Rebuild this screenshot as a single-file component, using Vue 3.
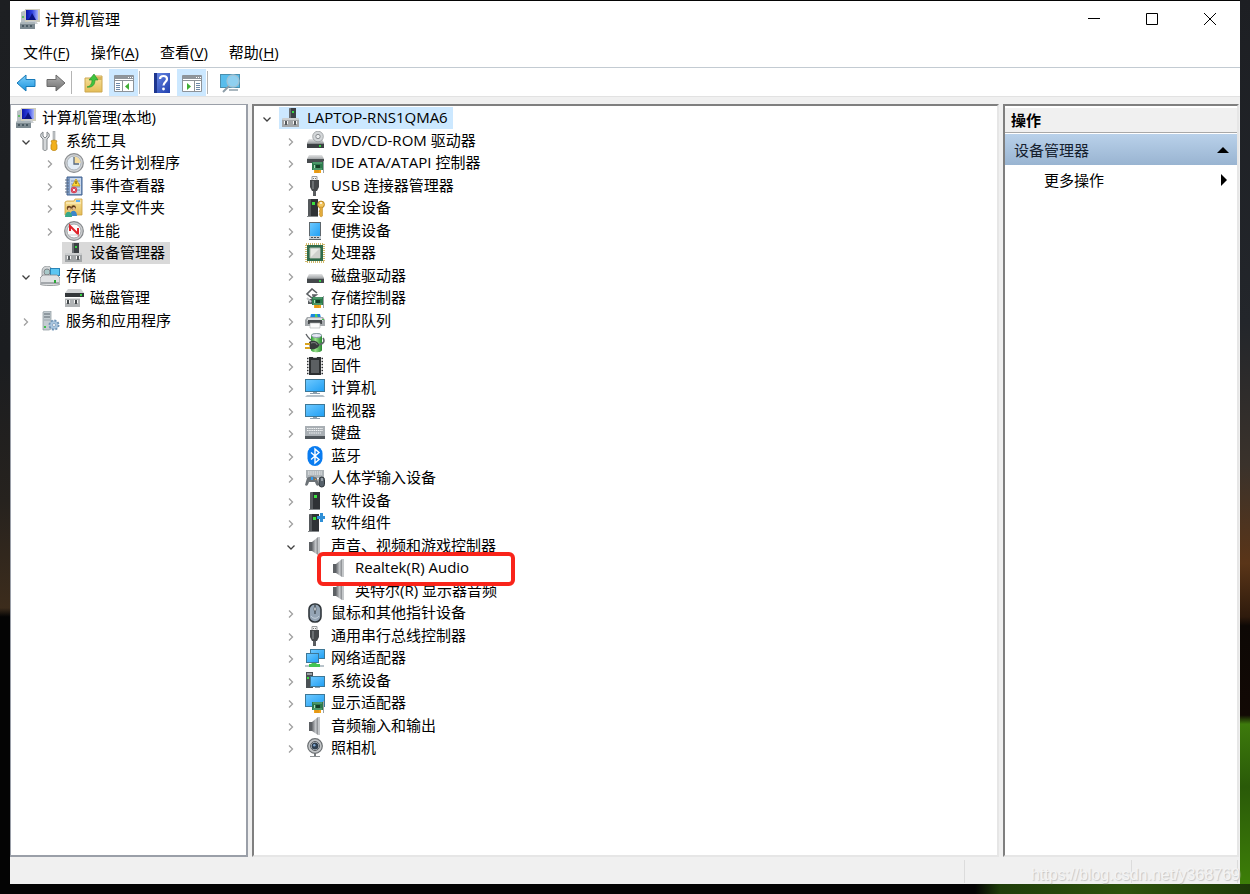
<script setup>
import { ref } from 'vue'

const menus = [
  { text: '文件', key: 'F' },
  { text: '操作', key: 'A' },
  { text: '查看', key: 'V' },
  { text: '帮助', key: 'H' }
]

const tools = [
  { icon: 'back', label: '后退' },
  { icon: 'forward', label: '前进' },
  { sep: true },
  { icon: 'up', label: '上移' },
  { icon: 'panel-left', label: '显示/隐藏控制台树', on: true },
  { sep: true },
  { icon: 'help', label: '帮助' },
  { icon: 'panel-right', label: '显示/隐藏操作窗格', on: true },
  { sep: true },
  { icon: 'scan', label: '扫描检测硬件改动' }
]

const consoleTree = [
  { level: 'root', icon: 'manage', text: '计算机管理(本地)' },
  { level: 0, icon: 'tools', text: '系统工具', state: 'open' },
  { level: 1, icon: 'clock', text: '任务计划程序', state: 'closed' },
  { level: 1, icon: 'events', text: '事件查看器', state: 'closed' },
  { level: 1, icon: 'shared', text: '共享文件夹', state: 'closed' },
  { level: 1, icon: 'perf', text: '性能', state: 'closed' },
  { level: 1, icon: 'device', text: '设备管理器', selected: true },
  { level: 0, icon: 'storage', text: '存储', state: 'open' },
  { level: 1, icon: 'diskmgmt', text: '磁盘管理' },
  { level: 0, icon: 'services', text: '服务和应用程序', state: 'closed' }
]

const category = (icon, text) => ({ level: 1, icon, text, state: 'closed' })

const deviceTree = [
  { level: 0, icon: 'device', text: 'LAPTOP-RNS1QMA6', state: 'open', selected: true },
  category('dvd', 'DVD/CD-ROM 驱动器'),
  category('ide', 'IDE ATA/ATAPI 控制器'),
  category('usb', 'USB 连接器管理器'),
  category('security', '安全设备'),
  category('portable', '便携设备'),
  category('cpu', '处理器'),
  category('disk', '磁盘驱动器'),
  category('storagectl', '存储控制器'),
  category('printer', '打印队列'),
  category('battery', '电池'),
  category('firmware', '固件'),
  category('computer', '计算机'),
  category('monitor', '监视器'),
  category('keyboard', '键盘'),
  category('bluetooth', '蓝牙'),
  category('hid', '人体学输入设备'),
  category('software', '软件设备'),
  category('component', '软件组件'),
  { level: 1, icon: 'speaker', text: '声音、视频和游戏控制器', state: 'open' },
  { level: 2, icon: 'speaker', text: 'Realtek(R) Audio', marked: true },
  { level: 2, icon: 'speaker', text: '英特尔(R) 显示器音频' },
  category('mouse', '鼠标和其他指针设备'),
  category('usb', '通用串行总线控制器'),
  category('network', '网络适配器'),
  category('system', '系统设备'),
  category('display', '显示适配器'),
  category('speaker', '音频输入和输出'),
  category('camera', '照相机')
]

const panes = ref([
  { name: 'console', label: '控制台树', rows: consoleTree },
  { name: 'devices', label: '设备', rows: deviceTree }
])
</script>

<template>
  <div class="desktop">
    <svg class="sprite" width="0" height="0" aria-hidden="true">
      <defs>
        <linearGradient id="g-screen" x1="0" y1="0" x2="1" y2="1">
          <stop offset="0" stop-color="#6cc8ff" />
          <stop offset="1" stop-color="#22a0f4" />
        </linearGradient>
        <linearGradient id="g-navy" x1="0" y1="0" x2="1" y2="0">
          <stop offset="0" stop-color="#0a14a8" />
          <stop offset="0.5" stop-color="#2c3fe0" />
          <stop offset="1" stop-color="#a8b4fa" />
        </linearGradient>
        <linearGradient id="g-drive" x1="0" y1="0" x2="0" y2="1">
          <stop offset="0" stop-color="#e4e5e6" />
          <stop offset="1" stop-color="#a5a8aa" />
        </linearGradient>
        <linearGradient id="g-cone" x1="0" y1="0" x2="1" y2="0">
          <stop offset="0" stop-color="#66696d" />
          <stop offset="0.6" stop-color="#c2c5c8" />
          <stop offset="1" stop-color="#85888c" />
        </linearGradient>
        <linearGradient id="g-folder" x1="0" y1="0" x2="0" y2="1">
          <stop offset="0" stop-color="#f8e3a0" />
          <stop offset="1" stop-color="#e5bd57" />
        </linearGradient>
        <linearGradient id="g-blue" x1="0" y1="0" x2="0" y2="1">
          <stop offset="0" stop-color="#7fd0fb" />
          <stop offset="1" stop-color="#1a93dd" />
        </linearGradient>
        <linearGradient id="g-gray" x1="0" y1="0" x2="0" y2="1">
          <stop offset="0" stop-color="#b4b4b4" />
          <stop offset="1" stop-color="#6e6e6e" />
        </linearGradient>
        <linearGradient id="g-green" x1="0" y1="0" x2="1" y2="0">
          <stop offset="0" stop-color="#2d9a35" />
          <stop offset="0.4" stop-color="#9be08d" />
          <stop offset="1" stop-color="#258a2d" />
        </linearGradient>
        <linearGradient id="g-help" x1="0" y1="0" x2="1" y2="1">
          <stop offset="0" stop-color="#6c8be6" />
          <stop offset="1" stop-color="#1f3fae" />
        </linearGradient>
      </defs>

      <symbol id="i-manage" viewBox="0 0 20 20">
        <path d="M1 3l5-2v12H1z" fill="#b9c0c4" />
        <circle cx="3" cy="8" r="1" fill="#43b84a" />
        <path d="M5 0h15v13H5z" fill="#cfcdbd" />
        <path d="M6 1h12v10H6z" fill="url(#g-navy)" />
        <path d="M6 11c4 0 5-5 6-7l4 7z" fill="#0a1280" />
        <path d="M8 12h8l2 3h-8z" fill="#c9cdd0" />
        <path d="M1 13h13l1 2v5H0v-5z" fill="#7d8a91" />
        <path d="M1 13h13l1 2H0z" fill="#a9b4b9" />
        <path d="M2 17h2M6 17h2M10 17h2" stroke="#4a5a63" stroke-width="2" />
      </symbol>

      <symbol id="i-tools" viewBox="0 0 20 20">
        <path d="M3 1v4l2 2 2-2V1c2 1 3 3 2 5L7 8v10c0 2-4 2-4 0V8L1 6C0 4 1 2 3 1z" fill="#d4d7d9" stroke="#83888b" />
        <path d="M13 0h2v9h-2z" fill="#c3c7ca" stroke="#8a8f93" stroke-width="0.5" />
        <path d="M11 10c1-1 5-1 6 0l-1 2 1 2v4c-1 2-5 2-6 0v-4l1-2z" fill="#f2b11d" stroke="#b87f08" stroke-width="0.7" />
      </symbol>

      <symbol id="i-clock" viewBox="0 0 20 20">
        <circle cx="10" cy="10" r="9.3" fill="#d3d5d7" stroke="#8b8e91" stroke-width="1.2" />
        <circle cx="10" cy="10" r="7" fill="#e3edf6" stroke="#9ea5ab" stroke-width="0.8" />
        <path d="M10 10V3.500a6.500 6.500 0 0 1 6.500 6.500z" fill="#f6dc9c" />
        <path d="M10 4v7h5" fill="none" stroke="#56677a" stroke-width="1.3" />
      </symbol>

      <symbol id="i-events" viewBox="0 0 20 20">
        <path d="M3 1h15v18H3z" fill="#7f9cc4" stroke="#41618f" />
        <path d="M6 2h11v16H6z" fill="#c9d8ec" />
        <path d="M7 5h9M7 8h9M7 11h9M7 14h9" stroke="#7d98bf" />
        <path d="M1 4h4M1 7h4M1 10h4M1 13h4M1 16h4" stroke="#5d6d83" />
        <path d="M12 3l4 7H8z" fill="#ffd83b" stroke="#c29206" stroke-width="0.7" />
        <path d="M12 5v3" stroke="#4f3b00" />
        <circle cx="10" cy="14" r="3.200" fill="#d9455a" />
        <path d="M8.800 12.800l2.400 2.400M11.200 12.800l-2.400 2.400" stroke="#fff" stroke-width="0.9" />
      </symbol>

      <symbol id="i-shared" viewBox="0 0 20 20">
        <path d="M1 4l2-1h7l1-2h7v16H1z" fill="url(#g-folder)" stroke="#caa03e" stroke-width="0.8" />
        <path d="M12 2h4v2h-4z" fill="#5aaef0" />
        <path d="M2 5h15" stroke="#fff3cc" />
        <circle cx="5" cy="10" r="2.300" fill="#6b4420" />
        <circle cx="9.500" cy="9.500" r="2.300" fill="#5b3716" />
        <circle cx="5.300" cy="11" r="1.500" fill="#e8bf92" />
        <circle cx="9.800" cy="10.500" r="1.500" fill="#e8bf92" />
        <path d="M6 18c0-7 7-7 7 0z" fill="#3d86c8" />
        <path d="M1 19c0-7 7-7 7 0z" fill="#37a889" />
      </symbol>

      <symbol id="i-perf" viewBox="0 0 20 20">
        <circle cx="10" cy="10" r="9.300" fill="#cfd1d3" stroke="#85888b" stroke-width="1.200" />
        <circle cx="10" cy="10" r="7" fill="#fdfdfd" stroke="#8f9498" stroke-width="0.800" />
        <path d="M6 10V5l8 8V7" fill="none" stroke="#e0242b" stroke-width="2" />
        <path d="M5 14h10" stroke="#c9cdd0" />
      </symbol>

      <symbol id="i-device" viewBox="0 0 20 20">
        <path d="M8 1l1-1h6v11H8z" fill="#3c4044" />
        <path d="M8 1l1-1h1v11H8z" fill="#6b7074" />
        <path d="M11 3h2v2h-2z" fill="#37d443" />
        <path d="M2 10h15l1 2v7H1v-7z" fill="#a3a6a8" />
        <path d="M2 10h15l1 2H1z" fill="#cdcfd0" />
        <path d="M3 13h4v3H3zM12 13h4v3h-4z" fill="#f4f4f4" />
        <path d="M4 13h2v4H4zM13 13h2v4h-2z" fill="#55595c" />
      </symbol>

      <symbol id="i-storage" viewBox="0 0 20 20">
        <path d="M2 5c0-6 8-6 9-3v8H2z" fill="#d2d5d7" stroke="#83888b" stroke-width="0.700" />
        <circle cx="7" cy="6" r="3" fill="#a8c8c8" stroke="#7f8689" />
        <path d="M10 2h10v8H10z" fill="#2a85b8" />
        <path d="M11 3h8v6h-8z" fill="#5bc5f2" />
        <path d="M0 12l3-3h14l3 3v6c0 2-20 2-20 0z" fill="#e0e2e4" stroke="#85898c" stroke-width="0.800" />
        <path d="M1 16h18v2H1z" fill="#a4a8ac" />
        <path d="M14 14h2v3h-2z" fill="#2ca838" />
      </symbol>

      <symbol id="i-diskmgmt" viewBox="0 0 20 20">
        <path d="M4 1h13l3 4H1z" fill="#d1d3d5" />
        <path d="M1 5h19v4H1z" fill="#33373a" />
        <path d="M16 6h2v2h-2z" fill="#35d143" />
        <path d="M1 10h15v9H1z" fill="#b0b3b5" />
        <path d="M1 10h15v1H1z" fill="#dcdedf" />
        <path d="M2 12h4v3H2zM10 12h4v3h-4z" fill="#f4f4f4" />
        <path d="M3 12h2v4H3zM11 12h2v4h-2z" fill="#44484b" />
      </symbol>

      <symbol id="i-services" viewBox="0 0 20 20">
        <path d="M3 1l2-1h6v18l-2 1H3z" fill="#c3ccd1" stroke="#8a969c" stroke-width="0.700" />
        <path d="M4 3h6M4 6h6" stroke="#5a676e" />
        <path d="M4 9h6" stroke="#9aa6ac" />
        <path d="M4 15h2v2H4z" fill="#3cc04a" />
        <circle cx="14" cy="14" r="4.500" fill="#9fbcd6" stroke="#6f93b5" stroke-width="2" stroke-dasharray="2 1.500" />
        <circle cx="14" cy="14" r="3.600" fill="#a9c6e0" />
        <circle cx="14" cy="14" r="1.500" fill="#fff" stroke="#6688a8" stroke-width="0.600" />
      </symbol>

      <symbol id="i-dvd" viewBox="0 0 20 20">
        <path d="M4 8h13l2 4H2z" fill="url(#g-drive)" />
        <circle cx="13" cy="5.500" r="5.300" fill="#d3d6d8" stroke="#94989b" stroke-width="0.800" />
        <circle cx="13" cy="5.500" r="2.200" fill="#eceeef" stroke="#8b8f92" />
        <path d="M2 12h17v5H2z" fill="#3c4043" />
        <path d="M2 12h17v1H2z" fill="#8b8f91" />
        <path d="M14 14h2v2h-2z" fill="#35d143" />
      </symbol>

      <symbol id="i-pcb" viewBox="0 0 20 20">
        <path d="M7 9h11v8H7z" fill="#2c7a4c" />
        <path d="M8 10h9M8 16h9" stroke="#68b184" />
        <path d="M11 12h4v3h-4z" fill="#143d26" />
        <path d="M9 12h1v3H9z" fill="#a9dcb9" />
        <path d="M9 17h7v3H9z" fill="#f2a51c" />
        <path d="M11 17v3M13 17v3" stroke="#b87309" stroke-width="0.500" />
        <path d="M18.500 8v12" stroke="#9ba1a5" />
      </symbol>

      <symbol id="i-ide" viewBox="0 0 20 20">
        <path d="M4 2h13l2 4H2z" fill="url(#g-drive)" />
        <path d="M2 6h17v4H2z" fill="#484c4f" />
        <use href="#i-pcb" width="20" height="20" />
      </symbol>

      <symbol id="i-usb" viewBox="0 0 20 20">
        <path d="M7 0.500h5v4H7z" fill="#f2f2f2" stroke="#9a9c9e" />
        <path d="M8 2h1v1H8zM10 2h1v1h-1z" fill="#777" />
        <path d="M5 4h9v7l-2 4H7l-2-4z" fill="#45484b" />
        <path d="M7 5h2v8H7z" fill="#6b6f72" />
        <path d="M8 15h3v5H8z" fill="#5a5d60" />
      </symbol>

      <symbol id="i-tower" viewBox="0 0 20 20">
        <path d="M5 2l1-1h9v18H5z" fill="#2f3235" />
        <path d="M5 2l1-1h2v17H5z" fill="#54585b" />
        <path d="M9 4h3v3H9z" fill="#3be03f" />
        <path d="M4 18h11v1H4z" fill="#85898b" />
      </symbol>

      <symbol id="i-software" viewBox="0 0 20 20">
        <use href="#i-tower" width="20" height="20" />
      </symbol>

      <symbol id="i-security" viewBox="0 0 20 20">
        <use href="#i-tower" x="-2" width="20" height="20" />
        <circle cx="16" cy="6.500" r="3.400" fill="#f3c65f" stroke="#b88520" />
        <circle cx="16" cy="5" r="1" fill="#fff" />
        <path d="M14.500 9h3v9l-1.500 1-1-1-1-2 1-1-1-2 1-1z" fill="#e3ab3b" stroke="#b88520" stroke-width="0.500" />
      </symbol>

      <symbol id="i-portable" viewBox="0 0 20 20">
        <path d="M4 1h12v18H4z" fill="#5d666c" />
        <path d="M5 2h10v13H5z" fill="url(#g-screen)" />
        <path d="M4 15h12v3H4z" fill="#c9ced2" />
        <path d="M6 16.500h2M9 16.500h2M12 16.500h2" stroke="#4b5358" />
      </symbol>

      <symbol id="i-cpu" viewBox="0 0 20 20">
        <rect x="1" y="1" width="18" height="18" fill="none" stroke="#c2a33d" stroke-width="1.500" stroke-dasharray="1 1" />
        <path d="M2 2h16v16H2z" fill="#2f6b4b" />
        <path d="M5 5h10v10H5z" fill="#e9eae6" stroke="#aab8a8" />
        <path d="M15 5v10H5z" fill="#cfd1cd" />
      </symbol>

      <symbol id="i-disk" viewBox="0 0 20 20">
        <path d="M4 8h13l2 4H2z" fill="url(#g-drive)" />
        <path d="M2 12h17v5H2z" fill="#44484b" />
        <path d="M2 12h17v1H2z" fill="#8b8f91" />
        <path d="M14 14h2v2h-2z" fill="#35d143" />
      </symbol>

      <symbol id="i-storagectl" viewBox="0 0 20 20">
        <path d="M12 5L7 1 2 6l5 4 4-3H7" fill="none" stroke="#5a5e61" stroke-width="1.600" />
        <path d="M3 11h7v5H3z" fill="#565a5d" />
        <path d="M2 10l4 4" stroke="#c4c7c9" stroke-width="2" />
        <use href="#i-pcb" width="20" height="20" />
      </symbol>

      <symbol id="i-printer" viewBox="0 0 20 20">
        <path d="M6 3h9l1 4H5z" fill="#1a86e0" />
        <path d="M10 3h2l1 4h-3z" fill="#4fd05b" />
        <path d="M2 6h16l2 3v6H0V9z" fill="#a4a8ab" />
        <path d="M3 7h14l1 3H2z" fill="#dcdedf" />
        <path d="M3 9h14v4H3z" fill="#45494c" />
        <path d="M5 12h10v5H5z" fill="#fbfbfb" stroke="#a8abad" stroke-width="0.600" />
        <path d="M17 8h2v1h-2z" fill="#43c04c" />
      </symbol>

      <symbol id="i-battery" viewBox="0 0 20 20">
        <path d="M6 3c0-4 11-4 11 0v14c0 3-11 3-11 0z" fill="url(#g-green)" />
        <ellipse cx="11.500" cy="2.500" rx="5" ry="2" fill="#e6e9f4" stroke="#7f85a5" stroke-width="0.800" />
        <path d="M1 1c2 4 3 4 5 6" fill="none" stroke="#5d6164" stroke-width="1.300" />
        <path d="M13 12c6-1 7-4 5-7" fill="none" stroke="#62686b" stroke-width="1.600" />
        <path d="M4 9c4-3 10 0 10 3s-5 5-9 4z" fill="#36393b" />
        <path d="M6 10c4-1 6 0 6 2" fill="none" stroke="#8b8f91" />
        <path d="M0 11h5M0 15h5" stroke="#d9a420" stroke-width="1.800" />
      </symbol>

      <symbol id="i-firmware" viewBox="0 0 20 20">
        <path d="M2 2.500h16M2 5.500h16M2 8.500h16M2 11.500h16M2 14.500h16M2 17.500h16" stroke="#2c2f31" stroke-width="1.500" />
        <path d="M3.500 1v18M16.500 1v18" stroke="#fff" stroke-width="0.500" />
        <path d="M4 1h4c0 2 4 2 4 0h4v18H4z" fill="#2c2f31" />
        <path d="M6 4h8v13H6z" fill="#5b5f62" />
      </symbol>

      <symbol id="i-computer" viewBox="0 0 20 20">
        <path d="M0 1h20v13H0z" fill="#3d7796" />
        <path d="M1 2h18v11H1z" fill="url(#g-screen)" />
        <path d="M8 14h4v1h3v1H5v-1h3z" fill="#8ca0ae" />
        <path d="M2 17h16l2 2H0z" fill="#b3bfc8" />
      </symbol>

      <symbol id="i-monitor" viewBox="0 0 20 20">
        <path d="M0 3h20v13H0z" fill="#3d7796" />
        <path d="M1 4h18v11H1z" fill="url(#g-screen)" />
        <path d="M8 16h4v1h3v1H5v-1h3z" fill="#8ca0ae" />
      </symbol>

      <symbol id="i-keyboard" viewBox="0 0 20 20">
        <path d="M0 3h20v10H0z" fill="#a9afb4" />
        <path d="M2 5.500h16M2 7.500h16M4 10h12" stroke="#f2f4f5" stroke-width="1.200" stroke-dasharray="1.500 0.700" />
        <path d="M0 13h20v3H0z" fill="#50565b" />
      </symbol>

      <symbol id="i-bluetooth" viewBox="0 0 20 20">
        <rect x="2.500" y="0" width="15" height="20" rx="7.500" fill="#0a7cf0" />
        <path d="M6 6.500l8 7-4 3.500V3l4 3.500-8 7" fill="none" stroke="#fff" stroke-width="1.400" />
      </symbol>

      <symbol id="i-hid" viewBox="0 0 20 20">
        <path d="M1 2h18v8H1z" fill="#aeb4b8" />
        <path d="M3 4h14M3 6h14" stroke="#f2f4f5" stroke-width="1.200" stroke-dasharray="1.500 0.700" />
        <path d="M2 10c3-2 7-2 10 0l2 7c-2 2-3 0-4-3H4c-1 3-2 5-4 3z" fill="#6c7277" />
        <path d="M6 9h2v3H6z" fill="#2f9df0" />
        <path d="M10 11h1v1h-1z" fill="#ee9b24" />
        <rect x="14" y="9" width="5.500" height="10" rx="2.700" fill="#55606a" stroke="#30373c" />
        <path d="M17 10v3" stroke="#d8dde0" />
      </symbol>

      <symbol id="i-component" viewBox="0 0 20 20">
        <use href="#i-tower" x="-1" width="20" height="20" />
        <path d="M15 0h3v3h2v3h-2v3h-3V6h-3V3h3z" fill="#2f8fd6" />
      </symbol>

      <symbol id="i-speaker" viewBox="0 0 20 20">
        <path d="M4 6h3v9H4z" fill="#5c6064" />
        <path d="M7 6l6-5v18l-6-4z" fill="url(#g-cone)" />
        <path d="M13 1h2v18h-2z" fill="#a9adb0" />
        <path d="M14 1v18" stroke="#dfe1e3" />
      </symbol>

      <symbol id="i-mouse" viewBox="0 0 20 20">
        <rect x="4" y="1" width="12" height="18" rx="5.500" fill="#95a5b5" stroke="#30363b" stroke-width="1.600" />
        <path d="M10 2v9" stroke="#3a4249" stroke-width="1.200" />
        <rect x="9" y="4" width="2" height="4" rx="1" fill="#dfe6ec" stroke="#30363b" stroke-width="0.500" />
        <path d="M6 13c2 3 6 3 8 0" fill="none" stroke="#c4d0da" />
      </symbol>

      <symbol id="i-network" viewBox="0 0 20 20">
        <path d="M5 1h15v10H5z" fill="#3d7796" />
        <path d="M6 2h13v8H6z" fill="url(#g-screen)" />
        <path d="M1 5h13v10H1z" fill="#3d7796" />
        <path d="M2 6h11v8H2z" fill="url(#g-screen)" />
        <path d="M7 15h4l1 1h3v3H4v-3h2z" fill="#43c453" />
        <path d="M0 17h4v2H0zM15 17h4v2h-4z" fill="#b9c4cb" />
      </symbol>

      <symbol id="i-system" viewBox="0 0 20 20">
        <path d="M1 1h7v16H1z" fill="#4b5155" />
        <path d="M2 2h5v2H2z" fill="#9aa0a4" />
        <path d="M2 6h2v2H2z" fill="#3be03f" />
        <path d="M5 5h15v11H5z" fill="#3d7796" />
        <path d="M6 6h13v9H6z" fill="url(#g-screen)" />
        <path d="M10 16h5v1h-5z" fill="#8ca0ae" />
      </symbol>

      <symbol id="i-display" viewBox="0 0 20 20">
        <path d="M0 1h20v13H0z" fill="#3d7796" />
        <path d="M1 2h18v11H1z" fill="url(#g-screen)" />
        <use href="#i-pcb" width="20" height="20" />
      </symbol>

      <symbol id="i-camera" viewBox="0 0 20 20">
        <path d="M9 14h2v4H9z" fill="#777b7e" />
        <path d="M5 18h10v1H5z" fill="#8d9194" />
        <circle cx="10" cy="8" r="7.300" fill="#c2c5c7" stroke="#6b6f72" stroke-width="1.200" />
        <circle cx="10" cy="8" r="4.500" fill="#dfe2e4" stroke="#5a5e61" />
        <circle cx="10" cy="8" r="3.500" fill="#30404f" />
        <circle cx="9.300" cy="7.300" r="1.200" fill="#7fa6d0" />
      </symbol>

      <symbol id="i-back" viewBox="0 0 20 20">
        <path d="M1 10l9-8v4.500h9v7h-9V18z" fill="url(#g-blue)" stroke="#1679b8" />
      </symbol>

      <symbol id="i-forward" viewBox="0 0 20 20">
        <path d="M19 10l-9-8v4.500H1v7h9V18z" fill="url(#g-gray)" stroke="#6a6a6a" />
      </symbol>

      <symbol id="i-up" viewBox="0 0 20 20">
        <path d="M1 5h7l2-2h8v16H1z" fill="url(#g-folder)" stroke="#cda850" />
        <path d="M11 4h7v3h-7z" fill="#d6b45c" />
        <path d="M3 14c4-1 5-4 5-7H5l5-6 4 6h-3c0 5-3 8-8 7z" fill="#3fc43f" stroke="#238c27" stroke-width="0.600" />
      </symbol>

      <symbol id="i-panel-left" viewBox="0 0 20 20">
        <path d="M0.500 2.500h19v16H.5z" fill="#fff" stroke="#8d9399" />
        <path d="M1 3h18v3H1z" fill="#8f959b" />
        <path d="M14 4.500h1M16 4.500h1M18 4.500h1" stroke="#fff" />
        <path d="M1 7.500h18M8.500 8v11" stroke="#8d9399" />
        <path d="M2 10.500h4M2 12.500h4M2 14.500h4M2 16.500h4" stroke="#6c88a8" />
        <path d="M15 10v7l-4-3.500z" fill="#3fae34" />
      </symbol>

      <symbol id="i-panel-right" viewBox="0 0 20 20">
        <path d="M0.500 2.500h19v16H.5z" fill="#fff" stroke="#8d9399" />
        <path d="M1 3h18v3H1z" fill="#8f959b" />
        <path d="M14 4.500h1M16 4.500h1M18 4.500h1" stroke="#fff" />
        <path d="M1 7.500h18M12.500 8v11" stroke="#8d9399" />
        <path d="M14 10.500h4M14 12.500h4M14 14.500h4M14 16.500h4" stroke="#6c88a8" />
        <path d="M5 10v7l4-3.500z" fill="#3fae34" />
      </symbol>

      <symbol id="i-help" viewBox="0 0 20 20">
        <path d="M2 0h16v20H2z" fill="url(#g-help)" />
        <path d="M2 0h3v20H2z" fill="#1e368f" />
        <path d="M8 6c0-4 7-4 7 0 0 3-3.500 3-3.500 6.500" fill="none" stroke="#fff" stroke-width="2.200" />
        <circle cx="11.500" cy="16" r="1.400" fill="#fff" />
      </symbol>

      <symbol id="i-scan" viewBox="0 0 20 20">
        <path d="M0 1h20v14H0z" fill="#4a8fae" />
        <path d="M1 2h18v12H1z" fill="#58bdec" />
        <path d="M9 16h9v2H9z" fill="#aab7bf" />
        <path d="M10 12l-7 7" stroke="#8d9da8" stroke-width="2" />
        <circle cx="13" cy="8" r="6" fill="#8fd0f0" stroke="#9fc3d6" stroke-width="1.300" />
      </symbol>
    </svg>

    <main class="window">
      <header class="titlebar">
        <svg class="icon"><use href="#i-manage" /></svg>
        <h1>计算机管理</h1>
        <div class="window-buttons">
          <button type="button" aria-label="最小化">
            <svg width="12" height="12" viewBox="0 0 12 12"><path d="M0 5.500h12" /></svg>
          </button>
          <button type="button" aria-label="最大化">
            <svg width="12" height="12" viewBox="0 0 12 12"><path d="M0.500 0.500h11v11h-11z" /></svg>
          </button>
          <button type="button" aria-label="关闭">
            <svg width="12" height="12" viewBox="0 0 12 12"><path d="M0 0l12 12M12 0L0 12" /></svg>
          </button>
        </div>
      </header>

      <nav class="menubar">
        <button v-for="m in menus" :key="m.key" type="button">{{ m.text }}(<u>{{ m.key }}</u>)</button>
      </nav>

      <div class="toolbar" role="toolbar">
        <template v-for="(t, i) in tools" :key="i">
          <span v-if="t.sep" class="sep"></span>
          <button v-else type="button" :class="{ on: t.on }" :aria-label="t.label">
            <svg class="icon"><use :href="'#i-' + t.icon" /></svg>
          </button>
        </template>
      </div>

      <div class="content">
        <section v-for="p in panes" :key="p.name" :class="['pane', p.name]" :aria-label="p.label">
          <ul class="tree">
            <li v-for="(row, i) in p.rows" :key="i" :class="['row', 'level-' + row.level]">
              <button v-if="row.state" type="button" :class="['toggle', row.state]" :aria-label="row.text">
                <svg width="10" height="10" viewBox="0 0 10 10">
                  <path v-if="row.state === 'open'" d="M1.500 3.500L5 7l3.500-3.500" />
                  <path v-else d="M3 1.500L6.500 5 3 8.500" />
                </svg>
              </button>
              <span v-else-if="row.level !== 'root'" class="toggle"></span>
              <span :class="['node', { selected: row.selected }]">
                <svg class="icon"><use :href="'#i-' + row.icon" /></svg>
                <span class="label">{{ row.text }}</span>
              </span>
              <span v-if="row.marked" class="mark"></span>
            </li>
          </ul>
        </section>

        <aside class="pane actions">
          <h2>操作</h2>
          <button type="button" class="group">
            设备管理器
            <svg width="12" height="6" viewBox="0 0 12 6"><path d="M0 6l6-6 6 6z" /></svg>
          </button>
          <button type="button" class="action">
            更多操作
            <svg width="6" height="12" viewBox="0 0 6 12"><path d="M0 0l6 6-6 6z" /></svg>
          </button>
        </aside>
      </div>

      <footer class="statusbar">
        <span></span>
        <span></span>
        <span></span>
        <div class="watermark">https://blog.csdn.net/y368769</div>
      </footer>
    </main>
  </div>
</template>

<style>
body { margin: 0; background: #030303; }
</style>

<style scoped>
.desktop {
  box-sizing: border-box;
  min-height: 100vh;
  display: flex;
  padding: 1px 10px 10px;
  font-family: 'Open Sans', 'Noto Sans CJK SC', sans-serif;
  font-size: 15px;
  line-height: 22px;
  color: #000;
  background:
    linear-gradient(90deg, transparent 78%, #1f3d0a 80%, #2c520c 90%, #1d3a08) bottom / 100% 10px no-repeat,
    linear-gradient(#1d1f23, #23262b 36%, #3a322b 52%, #5a3518 63%, #2e1a0c 69%, #0d0805 70%, #120905 80%, #3d7a0c 81%, #2a5a08 88%, #3f8208) right / 10px 100% no-repeat,
    linear-gradient(#1d1f22, #1b1d20 40%, #26221e 56%, #3c2c1c 68%, #040404 69%) left / 10px 100% no-repeat,
    #040404;
}
.sprite { position: absolute; }
.window { flex: 1; min-width: 0; display: flex; flex-direction: column; background: #f0f0f0; }
button { font: inherit; color: inherit; border: 0; padding: 0; background: none; }
.icon { width: 20px; height: 20px; flex: none; display: block; }

.titlebar { display: flex; align-items: center; height: 36px; padding: 0 1px 0 10px; background: #fff; }
.titlebar h1 { margin: 0 auto 0 5px; font-size: 15px; font-weight: 400; }
.window-buttons { display: flex; height: 100%; }
.window-buttons button { width: 58px; display: grid; place-items: center; }
.window-buttons path { fill: none; stroke: #000; }

.menubar { display: flex; gap: 1px; height: 30px; padding-left: 3px; background: #fff; border-bottom: 1px solid #c3cbd2; }
.menubar button { padding: 0 10px; }
.menubar u { text-underline-offset: 2px; }

.toolbar { display: flex; gap: 1px; height: 27px; padding: 1px 0 0 1px; background: #fff; border-bottom: 1px solid #e2e2e2; }
.toolbar button { width: 29px; display: grid; place-items: center; }
.toolbar .on { background: #cce8ff; }
.sep { width: 1px; margin: 2px 6px 2px 0; background: #b4b4b4; }

.content { flex: 1; display: grid; grid-template-columns: 238px 1fr 236px; gap: 4px; padding: 7px 1px 0 0; }
.pane { min-width: 0; box-sizing: border-box; background: #fff; }
.console { border: 2px solid #9a9fa8; border-width: 1px 2px 2px 1px; padding: 2px 0 0 3px; }
.devices, .actions { border: 2px solid; border-color: #7f7f7f #e6e6e6 #e6e6e6 #7f7f7f; }
.devices { padding: 1px 0 0 1px; }

/* two rows take 45px together */
.tree { list-style: none; margin: 0; padding: 0; }
.row { position: relative; display: flex; height: 22px; }
.row:nth-child(even) { height: 23px; }
.level-1 { padding-left: 24px; }
.level-2 { padding-left: 48px; }
.toggle { width: 24px; flex: none; display: grid; place-items: center; padding-top: 2px; }
.toggle path { fill: none; stroke: #a0a0a0; stroke-width: 1.3; }
.toggle.open path { stroke: #404040; }
.node { display: flex; align-items: center; padding: 0 5px 0 2px; white-space: nowrap; }
.label { margin-left: 6px; padding-bottom: 2px; line-height: 20px; }
.console .selected { background: #d9d9d9; }
.devices .selected { background: #cce8ff; }
.mark {
  position: absolute;
  z-index: 1;
  top: -5px;
  left: 62px;
  width: 190px;
  height: 26px;
  border: 4px solid #f9241a;
  border-radius: 6px;
}

.actions { display: flex; flex-direction: column; }
.actions h2 { margin: 2px 0 1px; padding: 1px 6px; font-size: 15px; line-height: 22px; background: #f0f0f0; border-bottom: 1px solid #a8a8a8; }
.actions button { display: flex; align-items: center; justify-content: space-between; height: 31px; text-align: left; }
.group { padding: 0 8px 0 9px; color: #15202e; background: linear-gradient(#b9d1ea, #99b4d1); }
.group svg, .action svg { fill: #000; }
.actions .action { height: 29px; padding: 0 10px 0 39px; }

.statusbar { position: relative; display: grid; grid-template-columns: 1fr 167px 106px; height: 27px; padding-right: 2px; }
.statusbar span { margin: 3px 0 1px; border-right: 1px solid #dcdcdc; }
.watermark {
  position: absolute;
  right: 0;
  bottom: -2px;
  font: 16px/22px 'Liberation Sans', sans-serif;
  color: #f4f4f4;
  text-shadow: 1px 1px 1px #c4c4c4;
}
</style>
